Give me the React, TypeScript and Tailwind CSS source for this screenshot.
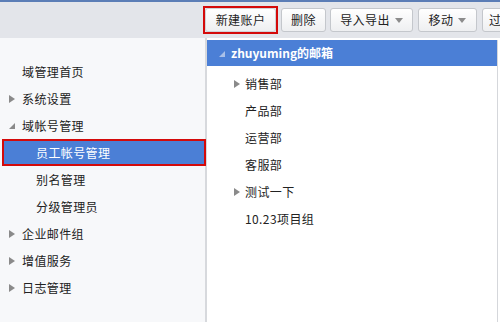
const font = { fontFamily: '"Noto Sans CJK SC", "Noto Sans", sans-serif' };

const sideItems: { label: string; level: 0 | 1; arrow?: "closed" | "open"; active?: boolean }[] = [
  { label: "域管理首页", level: 0 },
  { label: "系统设置", level: 0, arrow: "closed" },
  { label: "域帐号管理", level: 0, arrow: "open" },
  { label: "员工帐号管理", level: 1, active: true },
  { label: "别名管理", level: 1 },
  { label: "分级管理员", level: 1 },
  { label: "企业邮件组", level: 0, arrow: "closed" },
  { label: "增值服务", level: 0, arrow: "closed" },
  { label: "日志管理", level: 0, arrow: "closed" },
];

const treeItems: { label: string; arrow?: boolean }[] = [
  { label: "销售部", arrow: true },
  { label: "产品部" },
  { label: "运营部" },
  { label: "客服部" },
  { label: "测试一下", arrow: true },
  { label: "10.23项目组" },
];

function ClosedArrow() {
  return (
    <svg width="6" height="8" viewBox="0 0 6 8" className="shrink-0">
      <path d="M0 0 L6 4 L0 8 Z" fill="#8a8a8a" />
    </svg>
  );
}

function OpenArrow({ color = "#8a8a8a" }: { color?: string }) {
  return (
    <svg width="6" height="6" viewBox="0 0 6 6" className="shrink-0">
      <path d="M6 0 L6 6 L0 6 Z" fill={color} />
    </svg>
  );
}

function DropArrow() {
  return (
    <svg width="8" height="5" viewBox="0 0 8 5" className="ml-[5px] shrink-0">
      <path d="M0 0 L8 0 L4 5 Z" fill="#8c8c8c" />
    </svg>
  );
}

const btnClass =
  "flex h-[24px] items-center justify-center rounded-[3px] border border-[#c4c7cc] bg-gradient-to-b from-white to-[#eeeff1] text-[12px] tracking-[0.4px] text-[#222]";

export default function App() {
  return (
    <div className="relative h-[322px] w-[500px] overflow-hidden bg-white" style={font}>
      <div className="h-[2px] bg-[#5b7db6]" />

      {/* toolbar */}
      <div className="flex h-[36px] items-center overflow-hidden bg-[#e3e5ea]">
        <div className="w-[203px] shrink-0" />
        <div className="flex h-[28px] w-[75px] shrink-0 items-center justify-center border-2 border-[#d40a0a]">
          <button className={`${btnClass} h-[23px] w-[71px] border-[#d0d2d6]`}>新建账户</button>
        </div>
        <button className={`${btnClass} ml-[3px] w-[45px] shrink-0`}>删除</button>
        <button className={`${btnClass} ml-[4px] w-[83px] shrink-0`}>
          导入导出
          <DropArrow />
        </button>
        <button className={`${btnClass} ml-[5px] w-[59px] shrink-0`}>
          移动
          <DropArrow />
        </button>
        <button className={`${btnClass} ml-[5px] w-[24px] shrink-0 justify-start overflow-hidden whitespace-nowrap pl-[6px]`}>过</button>
      </div>

      <div className="flex h-[284px]">
        {/* sidebar */}
        <div className="w-[207px] shrink-0 border-r-2 border-[#d7d9dd] bg-[#f7f8fa] pt-[20px]">
          {sideItems.map((item) => (
            <div
              key={item.label}
              className={`flex h-[27px] items-center text-[12px] tracking-[0.4px] ${
                item.active
                  ? "ml-[2px] mr-[-1px] border-2 border-[#d40a0a] bg-[#4b7fd6] pl-[32px] text-white"
                  : item.level === 1
                  ? "pl-[36px] text-[#222]"
                  : "text-[#222]"
              }`}
            >
              {item.level === 0 && (
                <div className="flex w-[22px] shrink-0 justify-start pl-[9px]">
                  {item.arrow === "closed" && <ClosedArrow />}
                  {item.arrow === "open" && <OpenArrow />}
                </div>
              )}
              {item.label}
            </div>
          ))}
        </div>

        {/* tree */}
        <div className="flex-1 pt-[2px]">
          <div className="mr-[2px] h-full border-r border-[#d5d7db]">
            <div className="flex h-[26px] items-center bg-[#4b7fd6] pl-[12px] text-[12px] font-bold text-white">
              <span className="mr-[6px] mt-[2px]">
                <OpenArrow color="#a9c0e8" />
              </span>
              zhuyuming的邮箱
            </div>
            <div className="pt-[4px]">
              {treeItems.map((t) => (
                <div key={t.label} className="flex h-[27px] items-center text-[12px] tracking-[0.4px] text-[#222]">
                  <div className="flex w-[38px] shrink-0 pl-[27px]">{t.arrow && <ClosedArrow />}</div>
                  {t.label}
                </div>
              ))}
            </div>
          </div>
        </div>
      </div>
    </div>
  );
}
